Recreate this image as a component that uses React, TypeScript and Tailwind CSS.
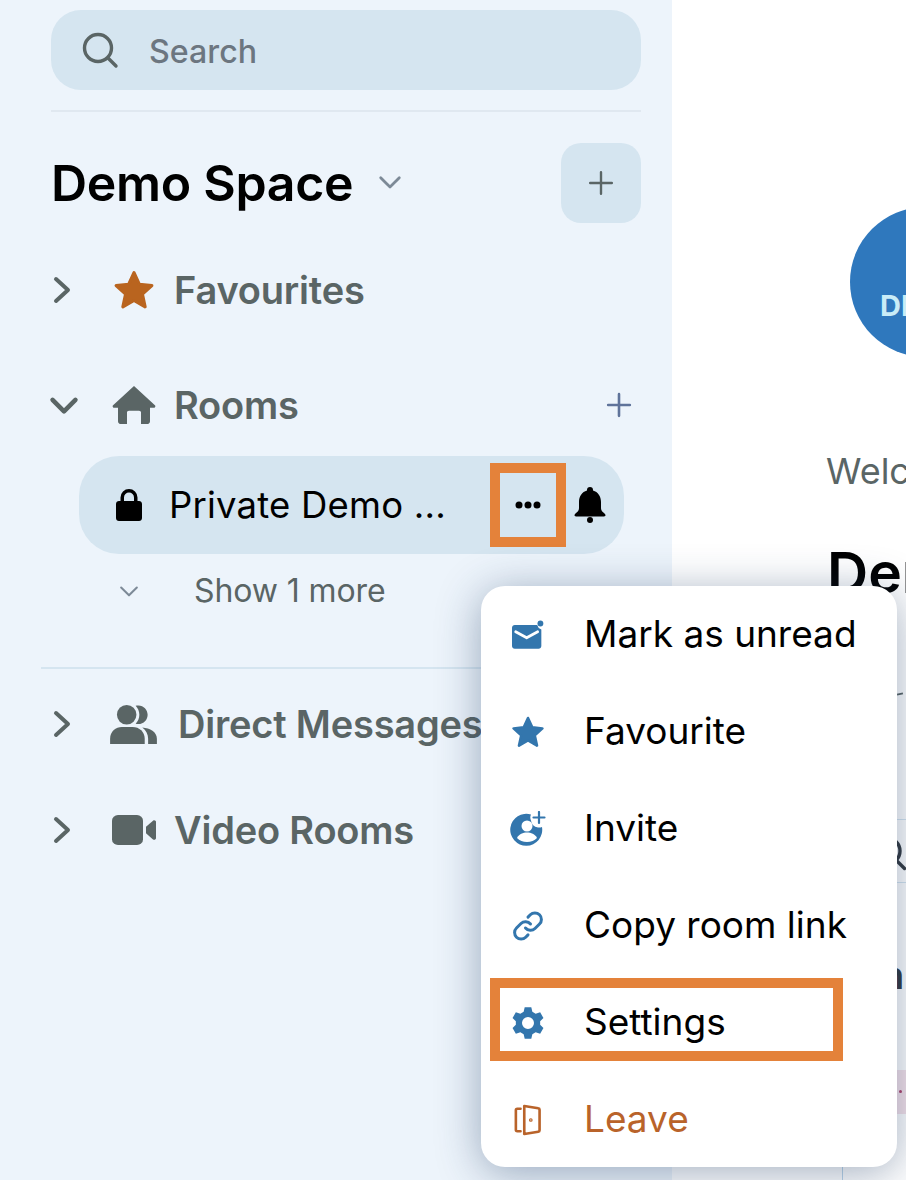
import React from "react";

const Chevron = ({ down = false, color = "#5a6565", w = 4, size = 28 }: { down?: boolean; color?: string; w?: number; size?: number }) => (
  <svg width={size} height={size} viewBox="0 0 28 28" fill="none" stroke={color} strokeWidth={w} strokeLinecap="round" strokeLinejoin="round">
    {down ? <path d="M4 9.500 14 19.500 24 9.500" /> : <path d="M5 3 17 14 5 25" />}
  </svg>
);

const Plus = ({ size, color, w }: { size: number; color: string; w: number }) => (
  <svg width={size} height={size} viewBox="0 0 24 24" fill="none" stroke={color} strokeWidth={w} strokeLinecap="round">
    <path d="M12 2v20M2 12h20" />
  </svg>
);

const Star = ({ size, color }: { size: number; color: string }) => (
  <svg width={size} height={size} viewBox="0 0 40 40" fill={color} stroke={color} strokeWidth="3" strokeLinejoin="round">
    <path d="M20 3.500 25 14.500 37 15.800 28 24 30.600 36 20 30 9.400 36 12 24 3 15.800 15 14.500Z" />
  </svg>
);

const House = () => (
  <svg width="44" height="38" viewBox="0 0 44 40" fill="#5a6565" preserveAspectRatio="none">
    <path d="M22 0 43.200 20.500c.6 1.200-.2 2.500-1.500 2.500H38v14c0 1.700-1.300 3-3 3h-6V28c0-1.200-.8-2-2-2H17c-1.200 0-2 .8-2 2v12H9c-1.700 0-3-1.300-3-3V23H2.300C1 23 .2 21.700.8 20.500Z" />
  </svg>
);

const People = () => (
  <svg width="48" height="39" viewBox="0 0 48 40" fill="#5a6565">
    <circle cx="17" cy="10" r="10" />
    <path d="M29 .4c5.500 0 9.500 4.500 9.500 9.600s-4 9.600-9.500 9.600c-1 0-2-.2-2.800-.4 2.300-2.400 3.800-5.600 3.800-9.200S28.500 3.200 26.200.8C27 .5 28 .4 29 .4Z" />
    <path d="M0 40v-5.500C0 27 6 22.500 12 22.500h11c7 0 12.500 5 12.500 12V40Z" />
    <path d="M33 23c8 .8 15 4.500 15 11.500V40h-9v-5.500c0-4.500-2.200-8.500-6-11.500Z" />
  </svg>
);

const Video = () => (
  <svg width="44" height="30" viewBox="0 0 44 32" fill="#5a6565" preserveAspectRatio="none">
    <rect x="0" y="0" width="31" height="32" rx="6" />
    <path d="M34 12.500 41 6c1.300-1 3-.2 3 1.500v17c0 1.700-1.700 2.500-3 1.500l-7-6.500Z" />
  </svg>
);

const Row = ({ icon, label, gap, chevron, right }: { icon: React.ReactNode; label: string; gap: string; chevron: React.ReactNode; right?: React.ReactNode }) => (
  <div className="flex items-center h-[60px]">
    <div className="w-[59px] shrink-0 flex items-center">{chevron}</div>
    <div className={`flex items-center justify-center shrink-0 w-[47px] ${gap}`}>{icon}</div>
    <span className="text-[38px] font-semibold text-[#5a6565] whitespace-nowrap tracking-[-0.2px]">{label}</span>
    {right}
  </div>
);

const items = [
  {
    label: "Mark as unread",
    icon: (
      <svg width="33" height="30" viewBox="0 0 36 32" fill="none">
        <path d="M3 5h24.500a7 7 0 0 0 4.500 5v18c0 1.700-1.300 3-3 3H3c-1.700 0-3-1.300-3-3V8c0-1.700 1.300-3 3-3Z" fill="#3376ad" />
        <path d="M4 12.500 16 19 28 12.500" stroke="#fff" strokeWidth="3" strokeLinecap="round" strokeLinejoin="round" />
        <circle cx="31" cy="3.500" r="3.200" fill="#3376ad" />
      </svg>
    ),
  },
  { label: "Favourite", icon: <Star size={34} color="#3376ad" /> },
  {
    label: "Invite",
    icon: (
      <svg width="36" height="36" viewBox="0 0 36 36" fill="none">
        <path d="M21 3.500A16 16 0 1 0 32 16a7 7 0 0 1-4 .5 8 8 0 0 1-7-7 7 7 0 0 1 0-6Z" fill="#3376ad" />
        <circle cx="17" cy="15" r="5.500" fill="#fff" />
        <path d="M7 27c2-4 6-5.500 10-5.500S25 23 27 27c-2.500 2.500-6 4-10 4s-7.500-1.500-10-4Z" fill="#fff" />
        <path d="M29 1v11M23.500 6.500h11" stroke="#3376ad" strokeWidth="2.200" strokeLinecap="round" />
      </svg>
    ),
  },
  {
    label: "Copy room link",
    icon: (
      <svg width="30" height="30" viewBox="0 0 30 30" fill="none" stroke="#3376ad" strokeWidth="3" strokeLinecap="round" strokeLinejoin="round">
        <path d="M12.500 17a6.500 6.500 0 0 0 9.500.5l4.500-4.500a6.500 6.500 0 0 0-9.200-9.200l-2.300 2.300" />
        <path d="M17.500 13a6.500 6.500 0 0 0-9.500-.5L3.500 17a6.500 6.500 0 0 0 9.200 9.200l2.300-2.300" />
      </svg>
    ),
  },
  {
    label: "Settings",
    icon: (
      <svg width="36" height="36" viewBox="0 0 24 24" fill="#3376ad">
        <path fillRule="evenodd" d="M9.800 1.500h4.400l.7 3 2.200 1.300 3-.9 2.200 3.800-2.200 2.100v2.400l2.200 2.100-2.200 3.800-3-.9-2.200 1.300-.7 3H9.800l-.7-3-2.200-1.300-3 .9-2.200-3.800 2.200-2.100v-2.400L1.700 8.700l2.200-3.800 3 .9 2.200-1.300ZM12 8a4 4 0 1 0 0 8 4 4 0 0 0 0-8Z" />
      </svg>
    ),
    hl: true,
  },
  {
    label: "Leave",
    icon: (
      <svg width="28" height="34" viewBox="0 0 30 34" fill="none" stroke="#b9632a" strokeWidth="2.800" strokeLinecap="round" strokeLinejoin="round">
        <path d="M11 2 26 4.500c.8.100 1.400.800 1.400 1.600v21.800c0 .8-.6 1.500-1.400 1.600L11 32Z" />
        <path d="M7 5H3.500C2.500 5 2 5.700 2 6.500v21c0 .8.500 1.500 1.500 1.500H7" />
        <circle cx="18" cy="17" r=".6" fill="#b9632a" />
      </svg>
    ),
    danger: true,
  },
];

export default function App() {
  return (
    <div className="relative w-[906px] h-[1180px] overflow-hidden bg-white flex font-['Inter',sans-serif]">
      <aside className="w-[672px] h-full shrink-0 bg-[#edf4fb] pl-[51px] pr-[31px] pt-[10px]">
        <div className="h-[80px] rounded-[30px] bg-[#d5e5f0] flex items-center pl-[31px]">
          <svg width="37" height="37" viewBox="0 0 37 37" fill="none" stroke="#5a6565" strokeWidth="3.400" strokeLinecap="round">
            <circle cx="16" cy="16" r="13.500" />
            <path d="M26 26l8 8" />
          </svg>
          <span className="ml-[30px] mt-[4px] text-[32.200px] font-medium text-[#6c7680]">Search</span>
        </div>
        <div className="h-[2px] mt-[20px] bg-[#e0e8f0]" />
        <div className="mt-[31px] h-[80px] flex items-center">
          <span className="text-[50px] font-semibold text-black tracking-[-0.3px]">Demo Space</span>
          <span className="ml-[24px] mb-[3px] flex">
            <Chevron down color="#7d8a97" w={3} size={26} />
          </span>
          <div className="ml-auto w-[80px] h-[80px] rounded-[20px] bg-[#d5e5f0] flex items-center justify-center">
            <Plus size={26} color="#5a6565" w={2.200} />
          </div>
        </div>
        <div className="mt-[37px]">
          <Row chevron={<Chevron />} icon={<Star size={42} color="#b9641f" />} gap="mr-[17px]" label="Favourites" />
        </div>
        <div className="mt-[55px]">
          <Row
            chevron={<span className="-ml-[3px] flex"><Chevron down w={4} size={32} /></span>}
            icon={<House />}
            gap="mr-[17px]"
            label="Rooms"
            right={<span className="ml-auto mr-[9px] flex"><Plus size={26} color="#5f739a" w={2.400} /></span>}
          />
        </div>
        <div className="mt-[21px] ml-[28px] mr-[17px] h-[98px] rounded-[40px] bg-[#d5e5f0] flex items-center pl-[37px]">
          <svg className="shrink-0" width="26" height="32" viewBox="0 0 26 32" fill="#000">
            <path fillRule="evenodd" d="M13 0a8.500 8.500 0 0 1 8.500 8.500V12H23c1.700 0 3 1.300 3 3v14c0 1.700-1.300 3-3 3H3c-1.700 0-3-1.300-3-3V15c0-1.700 1.300-3 3-3h1.500V8.500A8.500 8.500 0 0 1 13 0Zm0 3.500a5 5 0 0 0-5 5V12h10V8.500a5 5 0 0 0-5-5Z" />
          </svg>
          <span className="ml-[27px] text-[36.500px] text-black tracking-[0.2px] whitespace-nowrap">Private Demo ...</span>
          <svg className="ml-[69px] shrink-0" width="26" height="8" viewBox="0 0 26 8" fill="#000">
            <circle cx="4" cy="4" r="3.500" />
            <circle cx="13" cy="4" r="3.500" />
            <circle cx="22" cy="4" r="3.500" />
          </svg>
          <svg className="ml-[33px] shrink-0" width="32" height="36" viewBox="0 0 32 36" fill="#000">
            <path d="M16 0a3 3 0 0 1 3 3v.6C24 5 27 9.500 27 15v6c0 2.500 1.500 4 3.500 5.500.5.400 1 1 1 1.800 0 .7-.6 1.200-1.500 1.200H2c-.9 0-1.500-.5-1.500-1.200 0-.8.5-1.400 1-1.800C3.500 25 5 23.500 5 21v-6C5 9.500 8 5 13 3.600V3a3 3 0 0 1 3-3Z" />
            <circle cx="16" cy="33" r="3" />
          </svg>
        </div>
        <div className="mt-[17px] h-[40px] ml-[67px] flex items-center">
          <Chevron down color="#7d8a97" w={2.600} size={22} />
          <span className="ml-[54px] text-[32px] text-[#5a6565] whitespace-nowrap tracking-[-0.1px]">Show 1 more</span>
        </div>
        <div className="h-[2px] mt-[56px] -ml-[10px] bg-[#d5e5f0]" />
        <div className="mt-[25px] -mr-[40px]">
          <Row chevron={<Chevron />} icon={<People />} gap="mr-[21px]" label="Direct Messages" />
        </div>
        <div className="mt-[46px]">
          <Row chevron={<Chevron />} icon={<Video />} gap="mr-[17px]" label="Video Rooms" />
        </div>
      </aside>

      <main className="flex-1 min-w-0 overflow-hidden relative pl-[155px]">
        <div className="mt-[207px] ml-[23px] w-[150px] h-[150px] rounded-full bg-[#2f78bd] flex items-center pl-[30px] pt-[48px]">
          <span className="text-[29px] font-bold text-[#c9ecf7] whitespace-nowrap">DEMO</span>
        </div>
        <p className="mt-[92px] -ml-[1px] text-[36px] leading-[44px] text-[#5a6565] whitespace-nowrap">Welcome</p>
        <h1 className="mt-[50px] text-[57px] leading-[60px] font-semibold text-black whitespace-nowrap">Demo</h1>
      </main>

      {/* page content showing at the right edge of the menu */}
      <div className="absolute left-[897px] top-[693px] w-[6px] h-[2px] bg-[#5a6565] -rotate-12" />
      <div className="absolute left-[672px] top-[819px] w-[234px] h-px bg-[#d5e5f0]" />
      <div className="absolute left-[672px] top-[882px] w-[234px] h-px bg-[#d5e5f0]" />
      <svg className="absolute left-[872px] top-[836px]" width="36" height="36" viewBox="0 0 36 36" fill="none" stroke="#33393f" strokeWidth="3.400" strokeLinecap="round">
        <circle cx="15" cy="15" r="13" />
        <path d="M24.500 24.500l8 8" />
      </svg>
      <span className="absolute left-[881px] top-[953px] text-[38px] font-semibold leading-[44px] text-[#33393f]">nn</span>
      <div className="absolute left-[850px] top-[1070px] w-[86px] h-[44px] rounded-full bg-[#f7e3ea]" />
      <div className="absolute left-[899px] top-[1090px] w-[3px] h-[3px] rounded-full bg-[#b0436b]" />
      <div className="absolute left-[842px] top-[1120px] w-px h-[60px] bg-[#bcd6ea]" />

      {/* highlight around the room options button */}
      <div className="absolute left-[490px] top-[463px] w-[76px] h-[84px] border-[10px] border-[#e4823a]" />

      {/* context menu */}
      <div className="absolute left-[481px] top-[586px] w-[416px] h-[581px] rounded-[24px] bg-white shadow-[0_6px_44px_rgba(30,60,100,0.42)]">
        {items.map((it) => (
          <div key={it.label} className="relative h-[97px] flex items-center">
            <div className="w-[94px] flex items-center justify-center shrink-0">{it.icon}</div>
            <span className={`ml-[9px] -mt-[2px] text-[37px] whitespace-nowrap ${it.danger ? "text-[#b9632a]" : "text-black"}`}>{it.label}</span>
            {it.hl && <div className="absolute left-[9px] top-[4px] w-[353px] h-[83px] border-[10px] border-[#e4823a]" />}
          </div>
        ))}
      </div>
    </div>
  );
}
